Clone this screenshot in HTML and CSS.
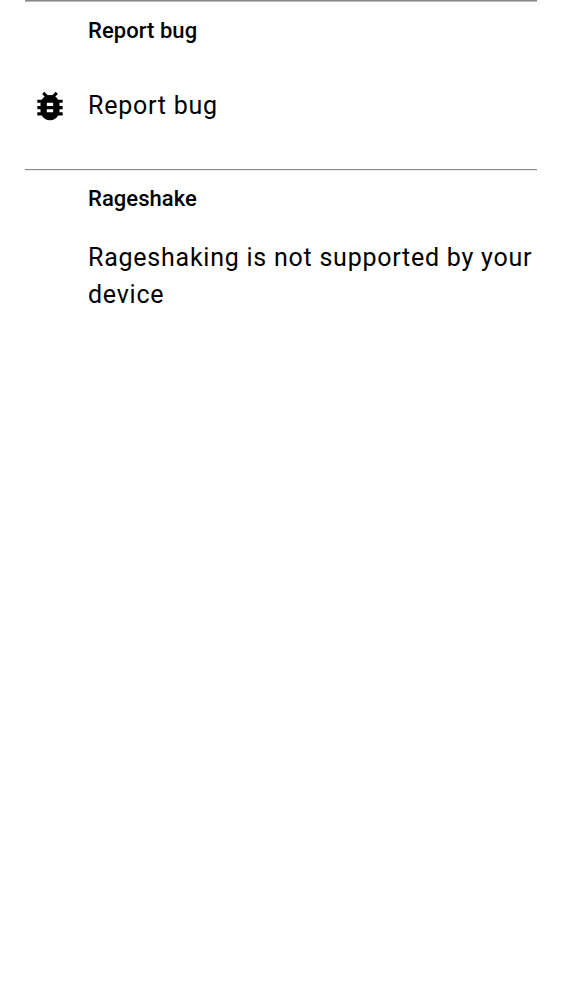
FILE: index.html
```html
<!DOCTYPE html>
<html lang="en">
<head>
<meta charset="utf-8">
<title>Report bug</title>
<link rel="stylesheet" href="styles.css">
</head>
<body>
<main class="settings">
<section class="category category-report">
<h2 class="title">Report bug</h2>
<div class="row">
<svg class="icon" viewBox="0 0 24 24" aria-hidden="true"><path d="M20 8h-2.81c-.45-.78-1.07-1.45-1.82-1.96L17 4.41 15.59 3l-2.17 2.17C12.96 5.06 12.49 5 12 5s-.96.06-1.41.17L8.41 3 7 4.41l1.62 1.63C7.88 6.55 7.26 7.22 6.81 8H4v2h2.09c-.05.33-.09.66-.09 1v1H4v2h2v1c0 .34.04.67.09 1H4v2h2.81c1.04 1.79 2.97 3 5.19 3s4.15-1.21 5.19-3H20v-2h-2.09c.05-.33.09-.66.09-1v-1h2v-2h-2v-1c0-.34-.04-.67-.09-1H20V8zm-6 8h-4v-2h4v2zm0-4h-4v-2h4v2z"/></svg>
<span class="label">Report bug</span>
</div>
</section>
<section class="category">
<h2 class="title">Rageshake</h2>
<p class="label message">Rageshaking is not supported by your device</p>
</section>
</main>
</body>
</html>
```
FILE: styles.css
```css
body {
  margin: 0;
  background: #fff;
  color: #000;
  font-family: Roboto, sans-serif;
}

.settings {
  padding: 0 25px;
}

.category {
  border-top: 1px solid #8b898d;
  box-shadow: inset 0 1px #efeeef;
  padding-left: 63px;
}

.category-report {
  height: 168px;
  box-shadow: inset 0 1px #b9b7bb;
}

.title {
  margin: 0;
  padding-top: 13px;
  font-size: 22px;
  font-weight: 500;
  line-height: 31px;
  letter-spacing: 0.05px;
}

.category-report .title {
  padding-top: 14px;
}

.row {
  display: flex;
  align-items: center;
  gap: 19px;
  height: 76px;
  margin: 22px 0 0 -57px;
}

.icon {
  width: 38px;
  height: 38px;
}

.label {
  font-size: 25px;
  line-height: 37px;
  letter-spacing: 0.76px;
}

.row .label {
  padding-bottom: 1px;
}

.message {
  margin: 25px -10px 0 0;
}
```
